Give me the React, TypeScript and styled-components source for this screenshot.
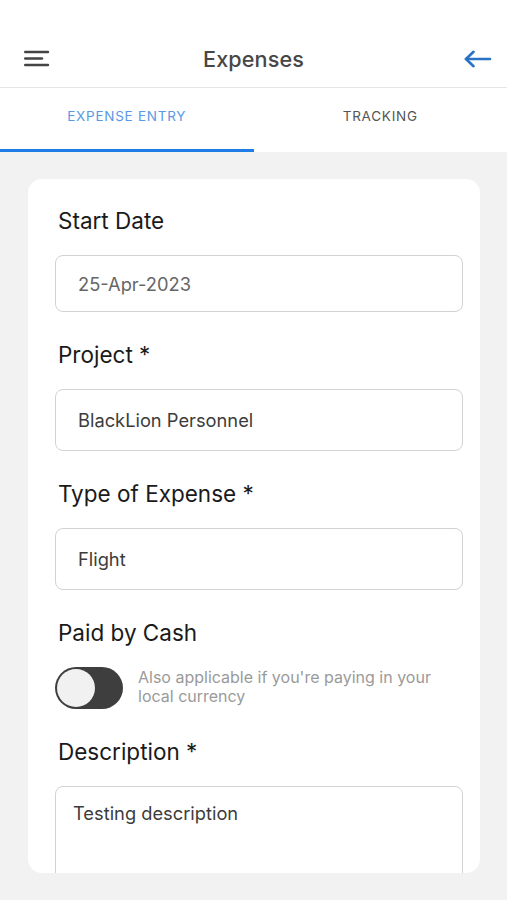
import React from "react";
import styled, { createGlobalStyle } from "styled-components";

const Global = createGlobalStyle`
  html, body { margin: 0; padding: 0; background: #f2f2f2; }
  body { font-family: Inter, "Noto Sans", Roboto, sans-serif; -webkit-font-smoothing: antialiased; }
  * { box-sizing: border-box; }
`;

const Screen = styled.div`
  width: 507px;
  height: 900px;
  display: flex;
  flex-direction: column;
  background: #f2f2f2;
  overflow: hidden;
`;

const Header = styled.header`
  height: 88px;
  padding: 30px 15px 0 15px;
  background: #ffffff;
  border-bottom: 1px solid #e6e6e6;
  display: grid;
  grid-template-columns: 70px 1fr 70px;
  align-items: center;
`;

const Title = styled.h1`
  margin: 0;
  text-align: center;
  font-size: 21.6px;
  font-weight: 500;
  color: #474747;
  letter-spacing: 0.1px;
`;

const IconBtn = styled.button<{ $align: "start" | "end" }>`
  border: 0;
  background: none;
  padding: 0 0 0 ${(p) => (p.$align === "start" ? "9px" : "0")};
  display: flex;
  justify-content: ${(p) => (p.$align === "start" ? "flex-start" : "flex-end")};
  align-items: center;
  height: 30px;
`;

const Tabs = styled.nav`
  height: 64px;
  background: #ffffff;
  display: grid;
  grid-template-columns: 1fr 1fr;
`;

const Tab = styled.div<{ $active?: boolean }>`
  display: flex;
  align-items: center;
  justify-content: center;
  font-size: 13.5px;
  font-weight: 400;
  letter-spacing: 0.75px;
  color: ${(p) => (p.$active ? "#5a99e4" : "#555555")};
  border-bottom: 3px solid ${(p) => (p.$active ? "#1f7de6" : "transparent")};
  padding-bottom: 5px;
`;

const Body = styled.main`
  flex: 1;
  padding: 27px 27px 0 28px;
`;

const Card = styled.section`
  height: 694px;
  overflow: hidden;
  background: #ffffff;
  border-radius: 14px;
  padding: 29px 17px 0 27px;
`;

const Label = styled.div<{ $first?: boolean }>`
  margin: ${(p) => (p.$first ? "0" : "30px")} 0 21px 3px;
  font-size: 22.5px;
  line-height: 26px;
  color: #1a1a1a;
  font-weight: 400;
`;

const Field = styled.div<{ $h: number }>`
  height: ${(p) => p.$h}px;
  border: 1.5px solid #d2d2d2;
  border-radius: 8px;
  display: flex;
  align-items: center;
  padding-left: 22px;
  font-size: 18.3px;
  color: ${(p) => (p.$h < 60 ? "#666666" : "#3c3c3c")};
`;

const TextArea = styled.div`
  height: 130px;
  border: 1.5px solid #d2d2d2;
  border-radius: 8px;
  padding: 14px 17px;
  font-size: 18.3px;
  line-height: 24px;
  color: #3c3c3c;
`;

const ToggleRow = styled.div`
  display: flex;
  align-items: center;
  gap: 15px;
`;

const Toggle = styled.div`
  flex: none;
  width: 68px;
  height: 42px;
  border-radius: 21px;
  background: #3e3e3e;
  padding: 2px;
  display: flex;
  align-items: center;
`;

const Knob = styled.div`
  width: 38px;
  height: 38px;
  border-radius: 50%;
  background: #f1f1f1;
`;

const Helper = styled.div`
  font-size: 16px;
  line-height: 19px;
  color: #9a9a9a;
  margin-top: -2px;
`;

export default function App() {
  return (
    <>
      <Global />
      <Screen>
        <Header>
          <IconBtn $align="start" aria-label="menu">
            <svg width="26" height="18" viewBox="0 0 26 18">
              <g stroke="#444" strokeWidth="2.4" strokeLinecap="round">
                <line x1="1.2" y1="2" x2="24" y2="2" />
                <line x1="1.2" y1="8.5" x2="18" y2="8.5" />
                <line x1="1.2" y1="15" x2="24" y2="15" />
              </g>
            </svg>
          </IconBtn>
          <Title>Expenses</Title>
          <IconBtn $align="end" aria-label="back">
            <svg width="28" height="18" viewBox="0 0 28 18">
              <g stroke="#2a72c4" strokeWidth="2.6" strokeLinecap="round" strokeLinejoin="round" fill="none">
                <line x1="2" y1="9" x2="26" y2="9" />
                <polyline points="9.5,1.8 2,9 9.5,16.2" />
              </g>
            </svg>
          </IconBtn>
        </Header>
        <Tabs>
          <Tab $active>EXPENSE ENTRY</Tab>
          <Tab>TRACKING</Tab>
        </Tabs>
        <Body>
          <Card>
            <Label $first>Start Date</Label>
            <Field $h={57}>25-Apr-2023</Field>
            <Label>Project *</Label>
            <Field $h={62}>BlackLion Personnel</Field>
            <Label>Type of Expense *</Label>
            <Field $h={62}>Flight</Field>
            <Label>Paid by Cash</Label>
            <ToggleRow>
              <Toggle>
                <Knob />
              </Toggle>
              <Helper>
                Also applicable if you're paying in your
                <br />
                local currency
              </Helper>
            </ToggleRow>
            <Label>Description *</Label>
            <TextArea>Testing description</TextArea>
          </Card>
        </Body>
      </Screen>
    </>
  );
}
